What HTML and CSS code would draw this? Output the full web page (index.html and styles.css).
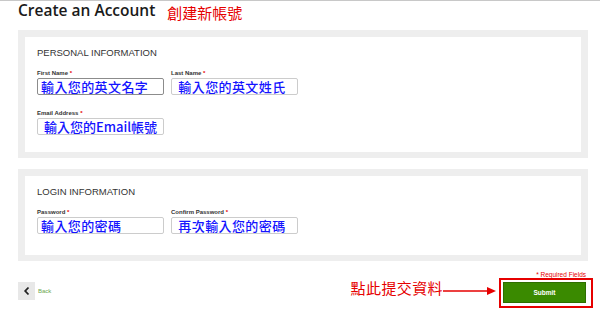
FILE: index.html
```html
<!DOCTYPE html>
<html lang="zh-Hant">
<head>
    <meta charset="UTF-8">
    <meta name="viewport" content="width=device-width, initial-scale=1.0">
    <title>Create an Account</title>
    <link rel="stylesheet" href="styles.css">
</head>
<body>
    <div class="pagina">
        <header class="cabecera">
            <h1 class="titulo">Create an Account</h1>
            <span class="nota-roja nota-titulo">創建新帳號</span>
        </header>

        <section class="panel">
            <div class="panel-interior panel-personal">
                <h2 class="panel-titulo">PERSONAL INFORMATION</h2>
                <div class="fila">
                    <div class="campo">
                        <label class="etiqueta">First Name <span class="req">*</span></label>
                        <div class="caja caja-activa">輸入您的英文名字</div>
                    </div>
                    <div class="campo">
                        <label class="etiqueta">Last Name <span class="req">*</span></label>
                        <div class="caja">&nbsp;輸入您的英文姓氏</div>
                    </div>
                </div>
                <div class="fila fila-email">
                    <div class="campo">
                        <label class="etiqueta">Email Address <span class="req">*</span></label>
                        <div class="caja caja-email">&nbsp;輸入您的Email帳號</div>
                    </div>
                </div>
            </div>
        </section>

        <section class="panel panel-login">
            <div class="panel-interior panel-acceso">
                <h2 class="panel-titulo">LOGIN INFORMATION</h2>
                <div class="fila">
                    <div class="campo">
                        <label class="etiqueta">Password <span class="req">*</span></label>
                        <div class="caja">輸入您的密碼</div>
                    </div>
                    <div class="campo">
                        <label class="etiqueta">Confirm Password <span class="req">*</span></label>
                        <div class="caja">&nbsp;再次輸入您的密碼</div>
                    </div>
                </div>
            </div>
        </section>

        <footer class="pie">
            <a class="volver" href="#">
                <span class="volver-caja">
                    <svg width="8" height="10" viewBox="0 0 8 10"><path d="M5.5 1.5 L2.2 5 L5.5 8.5" fill="none" stroke="#222" stroke-width="1.8"/></svg>
                </span>
                <span class="volver-texto">Back</span>
            </a>
            <div class="zona-envio">
                <span class="nota-roja nota-envio">點此提交資料</span>
                <svg class="flecha" width="54" height="10" viewBox="0 0 54 10">
                    <line x1="0" y1="5" x2="46" y2="5" stroke="#e60000" stroke-width="1.6"/>
                    <path d="M44 1 L53 5 L44 9 Z" fill="#e60000"/>
                </svg>
                <div class="columna-envio">
                    <div class="requeridos">* Required Fields</div>
                    <div class="marco-rojo">
                        <button class="boton-enviar" type="button">Submit</button>
                    </div>
                </div>
            </div>
        </footer>
    </div>
</body>
</html>
```

FILE: styles.css
```css
body{
    margin:0;
    background-color:#ffffff;
    border-top:1px solid #c8c8c8;
    font-family:"Liberation Sans", Arial, sans-serif;
    color:#333333;
}
.pagina{
    padding-left:18px;
    width:575px;
}
.cabecera{
    display:flex;
    align-items:flex-start;
    height:29px;
}
.titulo{
    margin:0;
    font-family:"Open Sans", "Liberation Sans", sans-serif;
    font-size:15.5px;
    font-weight:600;
    line-height:18px;
    color:#1a1a1a;
}
.nota-roja{
    color:#e60000;
    font-family:"Noto Sans CJK TC", "Noto Sans CJK SC", sans-serif;
    font-size:15px;
}
.nota-titulo{
    margin-left:12px;
    margin-top:3px;
    line-height:18px;
}
.panel{
    background-color:#eeeeee;
    width:556px;
    padding:7px 7px 6px 7px;
}
.panel-login{
    margin-top:11px;
}
.panel-interior{
    background-color:#ffffff;
    padding:11px 12px 0 12px;
}
.panel-personal{
    height:104px;
}
.panel-acceso{
    height:68px;
}
.panel-titulo{
    margin:0 0 11px 0;
    font-size:9.5px;
    font-weight:normal;
    line-height:10px;
    color:#333333;
}
.fila{
    display:grid;
    grid-template-columns:127px 127px;
    column-gap:7px;
}
.fila-email{
    margin-top:14px;
}
.etiqueta{
    display:block;
    font-size:6px;
    font-weight:bold;
    line-height:8px;
    color:#333333;
    margin-bottom:1px;
}
.req{
    color:#e60000;
}
.caja{
    box-sizing:border-box;
    height:17px;
    border:1px solid #cccccc;
    border-radius:2px;
    padding:0 3px;
    font-family:"Noto Sans CJK TC", "Noto Sans CJK SC", sans-serif;
    font-size:13px;
    font-weight:500;
    letter-spacing:0.4px;
    line-height:15px;
    color:#1414ff;
    white-space:nowrap;
}
.caja-email{
    letter-spacing:0;
}
.caja-activa{
    border-color:#8c8c8c;
}
.pie{
    display:flex;
    justify-content:space-between;
    align-items:flex-start;
    padding-top:10px;
}
.volver{
    display:flex;
    align-items:center;
    margin-top:11px;
    text-decoration:none;
}
.volver-caja{
    display:flex;
    align-items:center;
    justify-content:center;
    width:17px;
    height:18px;
    background-color:#e8e8e8;
}
.volver-texto{
    margin-left:3px;
    font-size:6px;
    color:#6aa84f;
}
.zona-envio{
    display:flex;
    align-items:flex-start;
}
.nota-envio{
    margin-top:7px;
    line-height:20px;
    letter-spacing:0.4px;
}
.flecha{
    margin-top:15px;
    margin-left:0;
}
.columna-envio{
    display:flex;
    flex-direction:column;
    align-items:flex-end;
    margin-left:2px;
}
.requeridos{
    font-size:6.5px;
    line-height:8px;
    color:#e60000;
    margin-right:7px;
    margin-bottom:-1px;
}
.marco-rojo{
    border:2px solid #e60000;
    padding:2px 5px 3px 2px;
}
.boton-enviar{
    display:block;
    width:83px;
    height:21px;
    background-color:#3a8a00;
    border:1px solid #2e6e00;
    color:#ffffff;
    font-family:"Liberation Sans", Arial, sans-serif;
    font-size:6.5px;
    font-weight:bold;
    padding:0;
}
```
